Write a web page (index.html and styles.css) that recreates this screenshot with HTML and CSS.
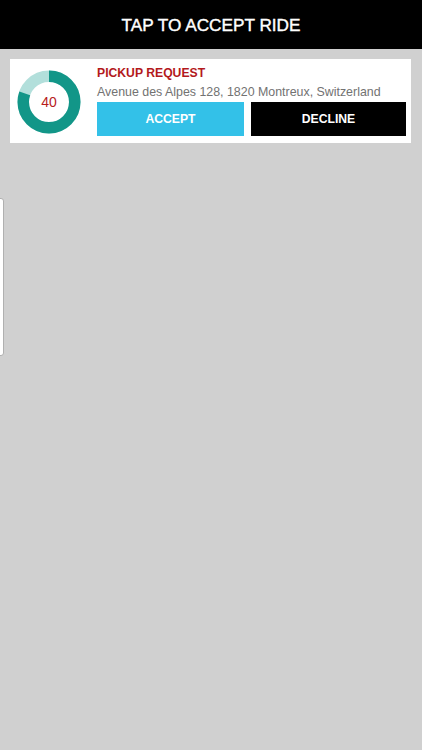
FILE: index.html
```html
<!DOCTYPE html>
<html>
<head>
<meta charset="utf-8">
<link rel="stylesheet" href="styles.css">
</head>
<body>
<header class="topbar"><span class="topbar-title">TAP TO ACCEPT RIDE</span></header>
<main class="content">
  <section class="card">
    <div class="timer">
      <svg class="timer-ring" width="66" height="66" viewBox="0 0 66 66">
        <circle cx="33" cy="33" r="25.75" fill="none" stroke="#b2dfdb" stroke-width="11.5"/>
        <circle cx="33" cy="33" r="25.75" fill="none" stroke="#129688" stroke-width="11.5" stroke-dasharray="129.4 200" transform="rotate(-90 33 33)"/>
      </svg>
      <span class="timer-value">40</span>
    </div>
    <div class="info">
      <div class="info-title">PICKUP REQUEST</div>
      <div class="info-address">Avenue des Alpes 128, 1820 Montreux, Switzerland</div>
      <div class="actions">
        <button class="btn btn-accept">ACCEPT</button>
        <button class="btn btn-decline">DECLINE</button>
      </div>
    </div>
  </section>
</main>
<div class="edge-tab"></div>
</body>
</html>
```
FILE: styles.css
```css
html, body {
  margin: 0;
  padding: 0;
}
body {
  background: #d0d0d0;
  font-family: "Liberation Sans", Arial, sans-serif;
  width: 422px;
  height: 750px;
  overflow: hidden;
  position: relative;
}
.topbar {
  height: 49px;
  background: #000;
  display: flex;
  align-items: center;
  justify-content: center;
  padding-top: 2px;
  box-sizing: border-box;
}
.topbar-title {
  color: #fff;
  font-size: 17.2px;
  font-weight: 400;
  -webkit-text-stroke: 0.4px #fff;
}
.content {
  padding: 10px 11px 0 10px;
}
.card {
  background: #fff;
  height: 84px;
  display: flex;
  box-sizing: border-box;
  padding: 0 5px 0 6px;
}
.timer {
  width: 66px;
  height: 66px;
  margin-top: 10px;
  position: relative;
  flex: none;
}
.timer-ring {
  display: block;
}
.timer-value {
  position: absolute;
  inset: 0;
  display: flex;
  align-items: center;
  justify-content: center;
  color: #b71c1c;
  font-size: 14px;
}
.info {
  flex: 1;
  margin-left: 15px;
  display: flex;
  flex-direction: column;
  padding-top: 7px;
}
.info-title {
  color: #b3191c;
  font-size: 12.2px;
  font-weight: 700;
  line-height: 15px;
}
.info-address {
  color: #727272;
  font-size: 12.4px;
  line-height: 15px;
  margin-top: 4px;
}
.actions {
  display: flex;
  gap: 7px;
  margin-top: 2px;
}
.btn {
  border: 0;
  height: 34px;
  font-family: "Liberation Sans", Arial, sans-serif;
  font-size: 12.2px;
  font-weight: 700;
  color: #fff;
  padding: 0;
}
.btn-accept {
  width: 147px;
  background: #33c1e8;
}
.btn-decline {
  flex: 1;
  background: #000;
}
.edge-tab {
  position: absolute;
  left: -4px;
  top: 198px;
  width: 6px;
  height: 156px;
  background: #fff;
  border: 1px solid #b0b0b0;
  border-radius: 3px;
}
```
